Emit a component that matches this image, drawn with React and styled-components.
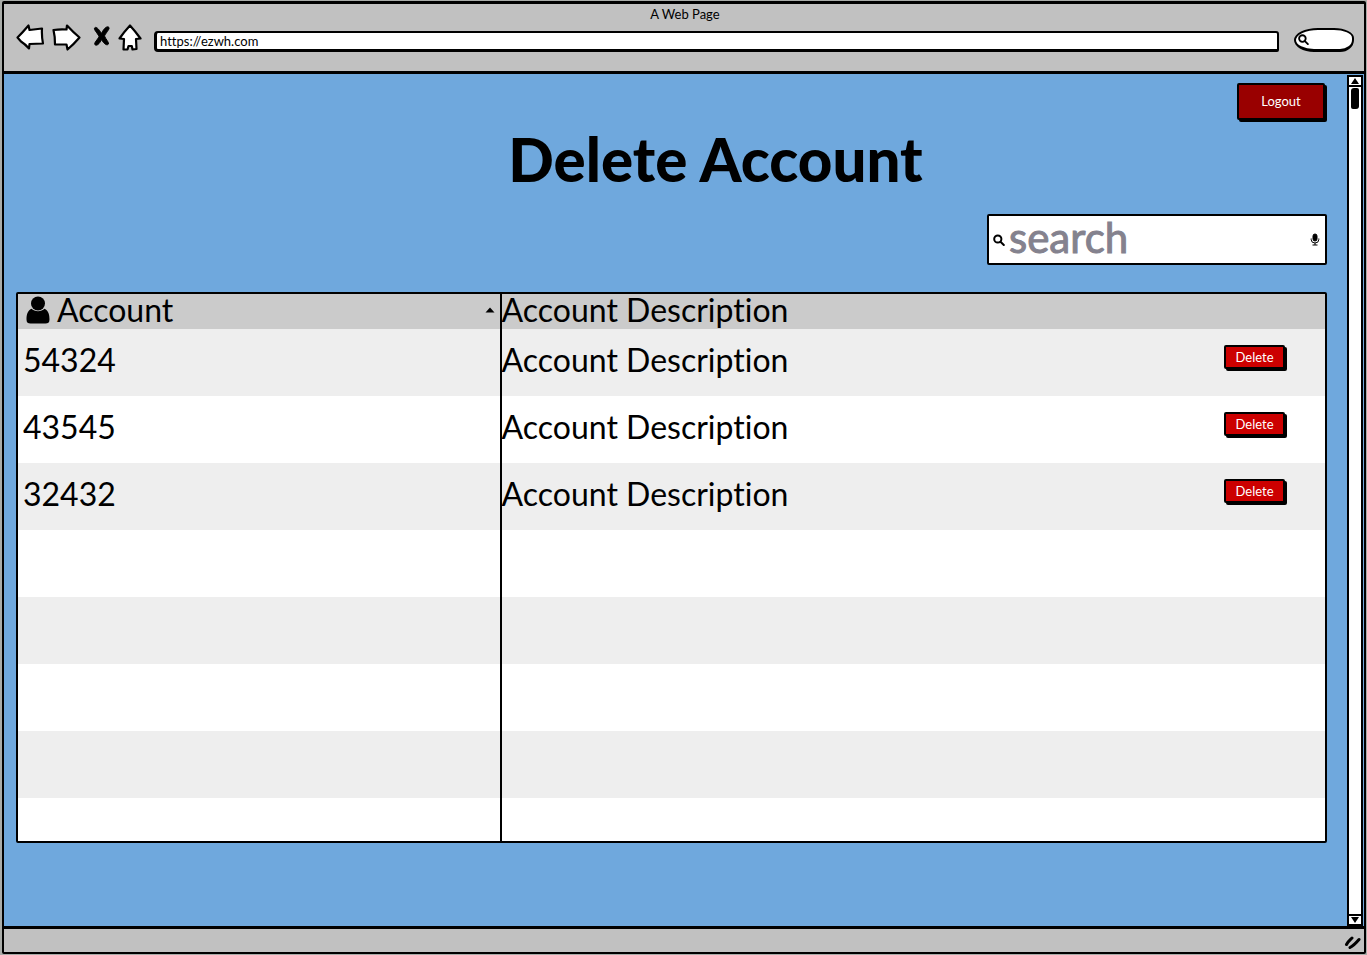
import React from "react";
import styled, { createGlobalStyle } from "styled-components";

const GlobalStyle = createGlobalStyle`
  * { box-sizing: border-box; }
  body {
    margin: 0;
    background: #a9aca9;
    color: #000;
    font-family: Lato, "Open Sans", sans-serif;
    font-weight: 400;
    font-variant-ligatures: none;
  }
  button, input { font-family: inherit; font-variant-ligatures: none; }
`;

const Window = styled.div`
  display: flex;
  flex-direction: column;
  min-height: calc(100vh - 3px);
  margin: 1px 1px 2px 2px;
  border: 2px solid #000;
  border-top-width: 3px;
  border-radius: 2px;
  background: #c1c1c1;
`;

const Chrome = styled.header`
  padding: 0 10px 19px 12px;
  border-bottom: 3px solid #000;
`;

const WindowTitle = styled.div`
  height: 20px;
  text-align: center;
  font-size: 13px;
  line-height: 20px;
`;

const NavBar = styled.nav`
  display: flex;
  align-items: flex-end;
  height: 28px;
`;

const NavButton = styled.button`
  flex: none;
  display: block;
  width: ${(p) => p.$width}px;
  height: 28px;
  margin-right: ${(p) => p.$gap}px;
  padding: 0;
  border: 0;
  background: none;
`;

const Drawing = styled.svg`
  display: block;
  flex: none;
`;

const AddressInput = styled.input`
  flex: 1;
  min-width: 0;
  height: 21px;
  padding: 0 3px 1px;
  border: 2px solid #000;
  border-bottom-width: 3px;
  border-left-width: 3px;
  border-radius: 4px 3px 2px 4px;
  background: #fff;
  color: #000;
  font-size: 13px;
  outline: none;
`;

const BrowserSearch = styled.label`
  flex: none;
  display: flex;
  align-items: center;
  width: 60px;
  height: 24px;
  margin-left: 15px;
  padding-left: 2px;
  border: 2px solid #000;
  border-bottom-width: 3px;
  border-radius: 24px 20px 14px 20px / 12px 10px 12px 12px;
  background: #fff;
`;

const BareInput = styled.input`
  flex: 1;
  min-width: 0;
  padding: 0;
  border: 0;
  background: none;
  outline: none;
  color: #000;
  font-size: ${(p) => p.$size}px;
`;

const SearchInput = styled(BareInput)`
  padding-bottom: 5px;
  &::placeholder {
    color: #84828e;
    opacity: 1;
    -webkit-text-stroke: 1px #84828e;
  }
`;

const Viewport = styled.div`
  flex: 1;
  display: flex;
  background: #6fa8dd;
`;

const Page = styled.main`
  flex: 1;
  min-width: 0;
  display: flex;
  flex-direction: column;
  padding: 9px 20px 83px 12px;
`;

const ActionButton = styled.button`
  flex: none;
  border: 2px solid #000;
  border-radius: 2px;
  color: #fff;
  padding: 0 0 1px;
  font-size: 13px;
`;

const LogoutButton = styled(ActionButton)`
  align-self: flex-end;
  width: 88px;
  height: 37px;
  margin-right: 2px;
  background: #990000;
  box-shadow: 2px 2px 0 #000;
`;

const DeleteButton = styled(ActionButton)`
  width: 61px;
  height: 24px;
  margin: 16px 40px 0 0;
  background: #cc0000;
  box-shadow: 2px 2px 0 #000;
`;

const PageTitle = styled.h1`
  margin: 1px 0 0;
  padding-left: 88px;
  text-align: center;
  font-size: 60px;
  line-height: 76px;
  font-weight: 900;
`;

const SearchBox = styled.label`
  align-self: flex-end;
  display: flex;
  align-items: center;
  width: 340px;
  height: 51px;
  margin: 17px 0 27px;
  padding: 0 5px 0 4px;
  gap: 4px;
  border: 2px solid #000;
  border-radius: 2px;
  background: #fff;
`;

const AccountTable = styled.table`
  width: 100%;
  table-layout: fixed;
  border: 2px solid #000;
  border-spacing: 0;
  border-radius: 2px;
  background: #fff;
`;

const HeadCell = styled.th`
  width: ${(p) => p.$width};
  height: 35px;
  padding: ${(p) => (p.$divided ? "0 5px 0 8px" : "0")};
  border-right: ${(p) => (p.$divided ? "2px solid #000" : "0")};
  background: #cbcbcb;
  vertical-align: top;
  text-align: left;
  font-size: 32px;
  line-height: 32px;
  font-weight: 400;
`;

const HeadContent = styled.div`
  display: flex;
  align-items: center;
  gap: 7px;
`;

const HeadLabel = styled.span`
  flex: 1;
`;

const Row = styled.tr`
  height: ${(p) => (p.$last ? 43 : 67)}px;
  background: #fff;
  &:nth-child(odd) { background: #eee; }
`;

const Cell = styled.td`
  padding: ${(p) => (p.$divided ? "0 0 0 5px" : "0")};
  border-right: ${(p) => (p.$divided ? "2px solid #000" : "0")};
  vertical-align: top;
  font-size: 32px;
  line-height: 62px;
`;

const CellContent = styled.div`
  display: flex;
  align-items: flex-start;
  justify-content: space-between;
`;

const ScrollTrack = styled.div`
  flex: none;
  display: flex;
  flex-direction: column;
  width: 16px;
  margin: 1px 1px 0 0;
  border: 2px solid #000;
  background: #fff;
`;

const ScrollButton = styled.button`
  display: flex;
  align-items: center;
  justify-content: center;
  height: 10px;
  padding: 0;
  border: 0;
  border-top: ${(p) => (p.$end ? "2px solid #000" : "0")};
  border-bottom: ${(p) => (p.$end ? "0" : "2px solid #000")};
  background: #fff;
`;

const ScrollThumb = styled.div`
  width: 8px;
  height: 21px;
  margin: 1px auto auto;
  border-radius: 3px 2px 3px 2px;
  background: #000;
`;

const StatusBar = styled.footer`
  display: flex;
  justify-content: flex-end;
  height: 26px;
  padding: 5px 3px 0;
  border-top: 3px solid #000;
`;

const Magnifier = ({ size }) => (
  <Drawing width={size} height={size} viewBox="0 0 12 12" fill="none" stroke="#000" strokeWidth="2" strokeLinecap="round" aria-hidden="true">
    <circle cx="4.8" cy="5" r="3.6" />
    <path d="M7.5 7.8 10.8 11" />
  </Drawing>
);

const navIcons = [
  { label: "Back", width: 28, gap: 8, path: "M1.5 13.5Q7 8 12.5 1.5L13.5 6 26 4.5Q25.5 12 27 19.5L13.5 20 13 24.5Q9 20 5 17.5Z" },
  { label: "Forward", width: 29, gap: 12, path: "M1.5 6Q8 5 14.5 5.5L15 1.5Q21 8 27.5 13.5 22 20 15.5 25.5L14.5 20.5 3 20.5Q3 12 1.5 6Z" },
  {
    label: "Stop",
    width: 18,
    gap: 7,
    solid: true,
    path: "M1.5 4C2.5 2.5 5 3.5 8.5 9.5 11 4 14.5 1.5 16 3.5 17 5 12 10 11.5 12 12.5 15 16 18 15.5 20 14 22 11 20 8.5 15.5 6.5 20 3.5 22.5 1.8 20.5 1 18.5 4.5 16 6 12.5 4.5 9 .8 6 1.5 4Z",
  },
  { label: "Home", width: 24, gap: 12, path: "M12 1.5Q17 7 22.5 14.5L18 15 18.5 25 14.5 25.5 13.8 22 10.5 22 9.5 25.5 5.5 25.5 6 15 1.5 14.5Q6 8 12 1.5Z" },
];

const accounts = ["54324", "43545", "32432", "", "", "", "", ""];

export default function App() {
  return (
    <>
      <GlobalStyle />
      <Window>
        <Chrome>
          <WindowTitle>A Web Page</WindowTitle>
          <NavBar>
            {navIcons.map((icon) => (
              <NavButton key={icon.label} type="button" aria-label={icon.label} $width={icon.width} $gap={icon.gap}>
                <Drawing width={icon.width} height="28" viewBox={`0 0 ${icon.width} 28`} aria-hidden="true">
                  <path d={icon.path} fill={icon.solid ? "#000" : "#fff"} stroke="#000" strokeWidth={icon.solid ? 1 : 2.2} strokeLinejoin="round" />
                </Drawing>
              </NavButton>
            ))}
            <AddressInput type="text" aria-label="Address" defaultValue="https://ezwh.com" />
            <BrowserSearch>
              <Magnifier size={11} />
              <BareInput type="text" aria-label="Browser search" $size={12} />
            </BrowserSearch>
          </NavBar>
        </Chrome>
        <Viewport>
          <Page>
            <LogoutButton type="button">Logout</LogoutButton>
            <PageTitle>Delete Account</PageTitle>
            <SearchBox>
              <Magnifier size={12} />
              <SearchInput type="text" aria-label="Search accounts" placeholder="search" $size={42} />
              <Drawing width="10" height="13" viewBox="0 0 10 13" fill="none" stroke="#000" aria-hidden="true">
                <rect x="3" y="1" width="4" height="7" rx="2" fill="#000" />
                <path d="M1.2 5.5V6.5A3.8 3.5 0 0 0 8.8 6.5V5.5M5 10V12M2.5 12H7.5" />
              </Drawing>
            </SearchBox>
            <AccountTable>
              <thead>
                <tr>
                  <HeadCell scope="col" $width="37%" $divided>
                    <HeadContent>
                      <Drawing width="24" height="28" viewBox="0 0 24 28" aria-hidden="true">
                        <circle cx="12" cy="7.5" r="7" />
                        <path d="M5.5 12.8C8.5 16 15.5 16 18.5 12.8 22.5 14.5 23.5 19 23.5 23.5 23.5 26.5 22 27.5 19.5 27.5H4.5C2 27.5.5 26.5.5 23.5.5 19 1.5 14.5 5.5 12.8Z" />
                      </Drawing>
                      <HeadLabel>Account</HeadLabel>
                      <Drawing width="10" height="6" viewBox="0 0 10 6" aria-hidden="true">
                        <path d="M.5 5.5 5 .5 9.5 5.5Z" />
                      </Drawing>
                    </HeadContent>
                  </HeadCell>
                  <HeadCell scope="col">Account Description</HeadCell>
                </tr>
              </thead>
              <tbody>
                {accounts.map((account, index) => (
                  <Row key={index} $last={index === accounts.length - 1}>
                    <Cell $divided>{account}</Cell>
                    <Cell>
                      {account && (
                        <CellContent>
                          <span>Account Description</span>
                          <DeleteButton type="button">Delete</DeleteButton>
                        </CellContent>
                      )}
                    </Cell>
                  </Row>
                ))}
              </tbody>
            </AccountTable>
          </Page>
          <ScrollTrack>
            <ScrollButton type="button" aria-label="Scroll up">
              <Drawing width="8" height="6" viewBox="0 0 8 6" aria-hidden="true">
                <path d="M0 6 4 0 8 6Z" />
              </Drawing>
            </ScrollButton>
            <ScrollThumb />
            <ScrollButton type="button" aria-label="Scroll down" $end>
              <Drawing width="8" height="6" viewBox="0 0 8 6" aria-hidden="true">
                <path d="M0 0 4 6 8 0Z" />
              </Drawing>
            </ScrollButton>
          </ScrollTrack>
        </Viewport>
        <StatusBar>
          <Drawing width="17" height="16" viewBox="0 0 17 16" fill="none" stroke="#000" strokeWidth="3" strokeLinecap="round" aria-hidden="true">
            <path d="M2.5 10.5C4 7.5 6 6 8 4M6 13.5C9 12 12 9 15 5.5" />
          </Drawing>
        </StatusBar>
      </Window>
    </>
  );
}
